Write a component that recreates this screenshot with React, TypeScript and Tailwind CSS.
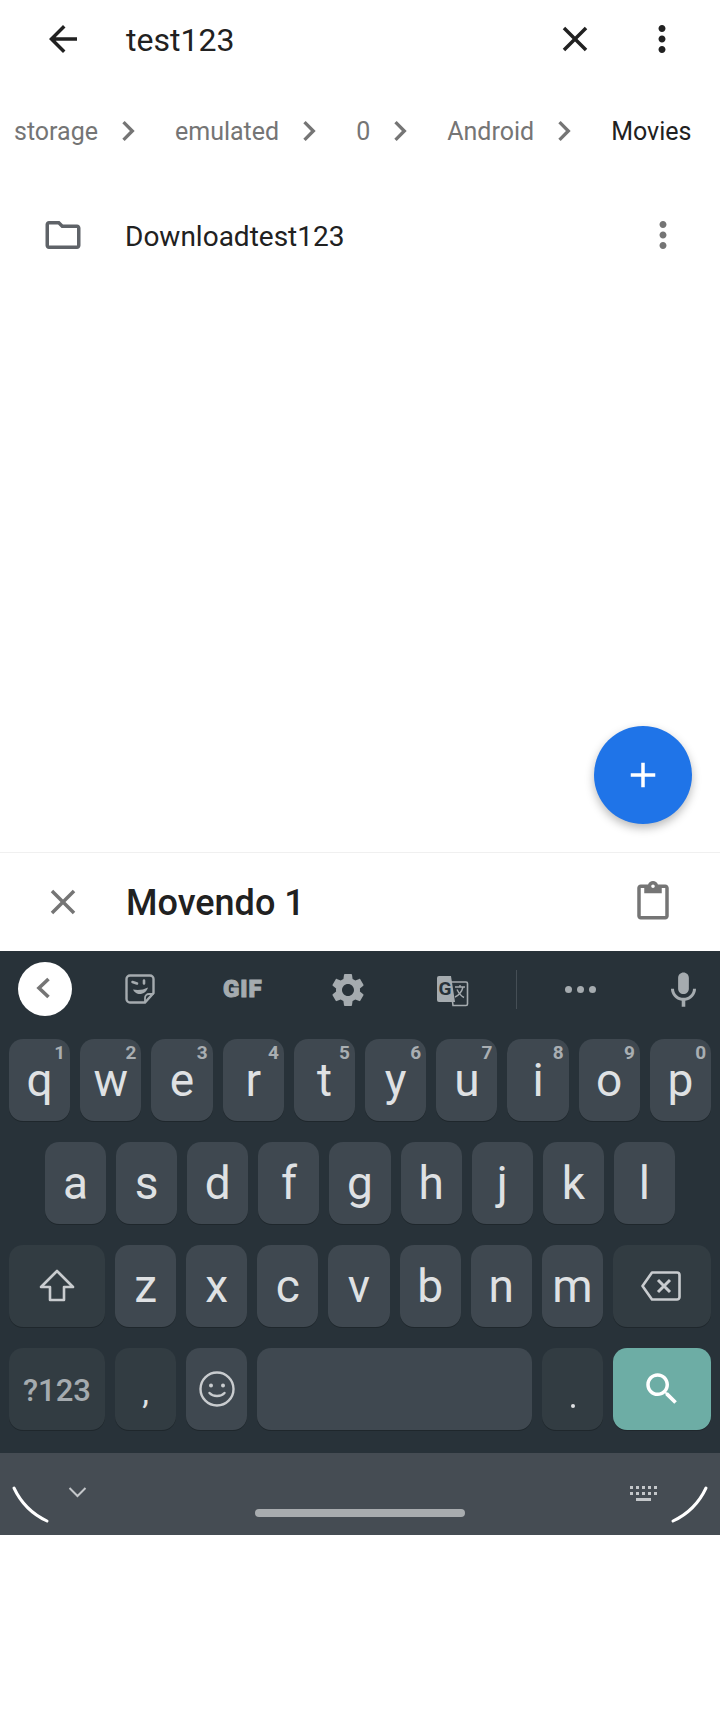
const R = '[font-family:Roboto,sans-serif]';

function Icon({ d, size = 42, fill = "#212121", className = "" }: { d: string; size?: number; fill?: string; className?: string }) {
    return (
        <svg width={size} height={size} viewBox="0 0 24 24" fill={fill} className={"shrink-0 " + className}>
            <path d={d} />
        </svg>
    );
}

const BACK = "M20 11H7.83l5.59-5.59L12 4l-8 8 8 8 1.41-1.41L7.83 13H20v-2z";
const CLOSE = "M19 6.41L17.59 5 12 10.59 6.41 5 5 6.41 10.59 12 5 17.59 6.41 19 12 13.41 17.59 19 19 17.59 13.41 12z";
const MORE = "M12 8c1.1 0 2-.9 2-2s-.9-2-2-2-2 .9-2 2 .9 2 2 2zm0 2c-1.1 0-2 .9-2 2s.9 2 2 2 2-.9 2-2-.9-2-2-2zm0 6c-1.1 0-2 .9-2 2s.9 2 2 2 2-.9 2-2-.9-2-2-2z";
const FOLDER = "M9.17 6l2 2H20v10H4V6h5.17M10 4H4c-1.1 0-1.99.9-1.99 2L2 18c0 1.1.9 2 2 2h16c1.1 0 2-.9 2-2V8c0-1.1-.9-2-2-2h-8l-2-2z";
const CHEVRON = "M10 6L8.59 7.41 13.17 12l-4.58 4.59L10 18l6-6z";
const PASTE = "M19 2h-4.18C14.4.84 13.3 0 12 0c-1.3 0-2.4.84-2.82 2H5c-1.1 0-2 .9-2 2v16c0 1.1.9 2 2 2h14c1.1 0 2-.9 2-2V4c0-1.1-.9-2-2-2zm-7 0c.55 0 1 .45 1 1s-.45 1-1 1-1-.45-1-1 .45-1 1-1zm7 18H5V4h2v3h10V4h2v16z";
const GEAR = "M19.14 12.94c.04-.3.06-.61.06-.94 0-.32-.02-.64-.07-.94l2.03-1.58c.18-.14.23-.41.12-.61l-1.92-3.32c-.12-.22-.37-.29-.59-.22l-2.39.96c-.5-.38-1.03-.7-1.62-.94l-.36-2.54c-.04-.24-.24-.41-.48-.41h-3.84c-.24 0-.43.17-.47.41l-.36 2.54c-.59.24-1.13.57-1.62.94l-2.39-.96c-.22-.08-.47 0-.59.22L2.74 8.87c-.12.21-.08.47.12.61l2.03 1.58c-.05.3-.09.63-.09.94s.02.64.07.94l-2.03 1.58c-.18.14-.23.41-.12.61l1.92 3.32c.12.22.37.29.59.22l2.39-.96c.5.38 1.03.7 1.62.94l.36 2.54c.05.24.24.41.48.41h3.84c.24 0 .44-.17.47-.41l.36-2.54c.59-.24 1.13-.56 1.62-.94l2.39.96c.22.08.47 0 .59-.22l1.92-3.32c.12-.22.07-.47-.12-.61l-2.01-1.58zM12 15.6c-1.98 0-3.6-1.62-3.6-3.6s1.62-3.6 3.6-3.6 3.6 1.62 3.6 3.6-1.62 3.6-3.6 3.6z";
const MIC = "M12 14c1.66 0 2.99-1.34 2.99-3L15 5c0-1.66-1.34-3-3-3S9 3.34 9 5v6c0 1.66 1.34 3 3 3zm5.3-3c0 3-2.54 5.1-5.3 5.1S6.7 14 6.7 11H5c0 3.41 2.72 6.23 6 6.72V21h2v-3.28c3.28-.48 6-3.3 6-6.72h-1.7z";
const SEARCH = "M15.5 14h-.79l-.28-.27C15.41 12.59 16 11.11 16 9.5 16 5.91 13.09 3 9.5 3S3 5.91 3 9.5 5.91 16 9.5 16c1.61 0 3.09-.59 4.23-1.57l.27.28v.79l5 4.99L20.49 19l-4.99-5zm-6 0C7.01 14 5 11.99 5 9.5S7.01 5 9.5 5 14 7.01 14 9.5 11.99 14 9.5 14z";

function Crumb({ label, last }: { label: string; last?: boolean }) {
    return (
        <>
            <span className={"pt-[2px] " + (last ? "text-[#212121]" : "text-[#757575]")}>{label}</span>
            {!last && <Icon d={CHEVRON} size={40} fill="#757575" className="ml-[10px] mr-[27px]" />}
        </>
    );
}

function Key({ ch, hint, dark }: { ch: string; hint?: string; dark?: boolean }) {
    return (
        <div className={"relative flex-1 h-[82px] rounded-[14px] flex justify-center pt-[18px] text-[46px] leading-[46px] text-[#dfe1e3] shadow-[0_1px_0_#1f272c] " + (dark ? "bg-[#323c42]" : "bg-[#3f4850]")}>
            {ch}
            {hint && <span className="absolute top-[3px] right-[5px] text-[19px] leading-[22px] font-bold text-[#a9aeb2]">{hint}</span>}
        </div>
    );
}

function FnKey({ children, className = "" }: { children?: React.ReactNode; className?: string }) {
    return (
        <div className={"h-[82px] rounded-[14px] flex items-center justify-center shadow-[0_1px_0_#1f272c] " + className}>
            {children}
        </div>
    );
}

export default function App() {
    const row1 = [["q", "1"], ["w", "2"], ["e", "3"], ["r", "4"], ["t", "5"], ["y", "6"], ["u", "7"], ["i", "8"], ["o", "9"], ["p", "0"]];
    return (
        <div className={"w-[720px] h-[1712px] bg-white flex flex-col " + R}>
            <div className="relative h-[853px] border-b border-[#f0f0f0]">
                <div className="h-[78px] flex items-center pl-[42px] pr-[37px]">
                    <Icon d={BACK} />
                    <span className="ml-[42px] pt-[2px] flex-1 text-[32px] text-[#212121]">test123</span>
                    <Icon d={CLOSE} />
                    <Icon d={MORE} className="ml-[45px]" />
                </div>
                <div className="h-[106px] flex items-center pl-[14px] text-[25px]">
                    <Crumb label="storage" />
                    <Crumb label="emulated" />
                    <Crumb label="0" />
                    <Crumb label="Android" />
                    <Crumb label="Movies" last />
                </div>
                <div className="h-[102px] flex items-center pl-[42px] pr-[36px]">
                    <Icon d={FOLDER} fill="#5f6368" />
                    <span className="ml-[41px] pt-[3px] flex-1 text-[28px] text-[#212121]">Downloadtest123</span>
                    <Icon d={MORE} fill="#757575" />
                </div>
                <div className="absolute left-[594px] top-[726px] w-[98px] h-[98px] rounded-full bg-[#1f74e8] flex items-center justify-center shadow-[0_4px_10px_rgba(0,0,0,0.28)]">
                    <Icon d="M19 13h-6v6h-2v-6H5v-2h6V5h2v6h6v2z" size={42} fill="#ffffff" />
                </div>
            </div>
            <div className="h-[98px] flex items-center pl-[42px] pr-[46px]">
                <Icon d={CLOSE} fill="#757575" />
                <span className="ml-[42px] pt-[2px] flex-1 text-[36px] font-medium text-[#212121]">Movendo 1</span>
                <Icon d={PASTE} fill="#757575" />
            </div>
            <div className="bg-[#283239] pb-[23px]">
                <div className="relative h-[88px]">
                    <div className="absolute left-[18px] top-[11px] w-[54px] h-[54px] rounded-full bg-white flex items-center justify-center">
                        <svg width="40" height="40" viewBox="0 0 40 40" fill="none" stroke="#757575" strokeWidth="3.6">
                            <path d="M25 11 L15.5 20 L25 29" transform="translate(-1.5,-1)" />
                        </svg>
                    </div>
                    <svg className="absolute left-[125px] top-[23px]" width="30" height="30" viewBox="0 0 30 30" fill="none" stroke="#a5abaf" strokeWidth="2.4">
                        <path d="M5 1.5H25a3.5 3.5 0 0 1 3.5 3.5V19L20 28.5H5A3.5 3.5 0 0 1 1.5 25V5A3.5 3.5 0 0 1 5 1.5Z" />
                        <path d="M20 28.5V24a4 4 0 0 1 4-4h4.500" strokeWidth="1.8" />
                        <path d="M7.500 8l4.500 1.500M19 6.500v3" strokeLinecap="round" strokeWidth="2.6" />
                        <path d="M8 15.500c5 1 10 .5 15-2-1 4-5 7-9.500 6.500-2-.2-4.500-2-5.500-4.500Z" fill="#a5abaf" stroke="none" />
                    </svg>
                    <span className="absolute left-[223px] top-[25px] text-[24px] leading-[26px] font-black tracking-[1px] text-[#a5abaf] [-webkit-text-stroke:1px_#a5abaf]">GIF</span>
                    <Icon d={GEAR} size={40} fill="#a5abaf" className="absolute left-[328px] top-[19px]" />
                    <svg className="absolute left-[437px] top-[24px]" width="32" height="32" viewBox="0 0 32 32">
                        <path d="M13 7H29a1.5 1.5 0 0 1 1.5 1.5V29a1.5 1.5 0 0 1-1.5 1.5H16L13 7Z" fill="none" stroke="#a5abaf" strokeWidth="1.6" />
                        <path d="M2 1H14L18 27H2a2 2 0 0 1-2-2V3a2 2 0 0 1 2-2Z" fill="#a5abaf" />
                        <text x="1.5" y="20" fontSize="19" fontWeight="700" fill="#283239">G</text>
                        <path d="M18 12H28M23 10V12M26 12C25 17 21 21 18 22M20 14.5c1.5 3 4 6.500 7 8" fill="none" stroke="#a5abaf" strokeWidth="1.4" />
                    </svg>
                    <div className="absolute left-[516px] top-[19px] w-px h-[39px] bg-[#454e55]" />
                    <div className="absolute left-[565px] top-[35px] flex gap-[5px]">
                        <span className="w-[7px] h-[7px] rounded-full bg-[#a5abaf]" />
                        <span className="w-[7px] h-[7px] rounded-full bg-[#a5abaf]" />
                        <span className="w-[7px] h-[7px] rounded-full bg-[#a5abaf]" />
                    </div>
                    <Icon d={MIC} size={43} fill="#a5abaf" className="absolute left-[662px] top-[18px]" />
                </div>
                <div className="flex flex-col gap-[21px]">
                    <div className="flex gap-[10px] px-[9px]">
                        {row1.map(([c, h]) => <Key key={c} ch={c} hint={h} />)}
                    </div>
                    <div className="flex gap-[10px] px-[45px]">
                        {"asdfghjkl".split("").map((c) => <Key key={c} ch={c} />)}
                    </div>
                    <div className="flex gap-[10px] px-[9px]">
                        <FnKey className="w-[96px] bg-[#323c42]">
                            <svg width="36" height="34" viewBox="0 0 36 34" fill="none" stroke="#c9cccf" strokeWidth="2.6" strokeLinejoin="round">
                                <path d="M18 2 L34 18 H25 V31 H11 V18 H2 Z" />
                            </svg>
                        </FnKey>
                        {"zxcvbnm".split("").map((c) => <Key key={c} ch={c} />)}
                        <FnKey className="w-[98px] bg-[#323c42]">
                            <svg width="40" height="30" viewBox="0 0 40 30" fill="none" stroke="#c9cccf" strokeWidth="2.6" className="-translate-x-[1px]">
                                <path d="M11 1.500H36a2.500 2.500 0 0 1 2.500 2.500V26a2.500 2.500 0 0 1-2.500 2.500H11L1.500 15Z" strokeLinejoin="round" />
                                <path d="M17 9 L29 21 M29 9 L17 21" strokeWidth="3" />
                            </svg>
                        </FnKey>
                    </div>
                    <div className="flex gap-[10px] px-[9px]">
                        <FnKey className="w-[96px] bg-[#323c42] pt-[4px] text-[31px] font-medium text-[#a5abaf]">?123</FnKey>
                        <FnKey className="w-[61px] bg-[#323c42] text-[34px] text-[#dfe1e3] !items-end pb-[12px]">,</FnKey>
                        <FnKey className="w-[61px] bg-[#3f4850]">
                            <svg width="38" height="38" viewBox="0 0 38 38" fill="none" stroke="#c9cccf" strokeWidth="2.4">
                                <circle cx="19" cy="19" r="16.500" />
                                <circle cx="13" cy="15.500" r="2" fill="#c9cccf" stroke="none" />
                                <circle cx="25" cy="15.500" r="2" fill="#c9cccf" stroke="none" />
                                <path d="M11.500 23c3.500 4 11.500 4 15 0" strokeLinecap="round" />
                            </svg>
                        </FnKey>
                        <FnKey className="flex-1 bg-[#3f4850]" />
                        <FnKey className="w-[61px] bg-[#323c42] !items-end pb-[22px]">
                            <span className="w-[4px] h-[4px] rounded-full bg-[#dfe1e3]" />
                        </FnKey>
                        <FnKey className="w-[98px] bg-[#6dada5]">
                            <Icon d={SEARCH} fill="#ffffff" />
                        </FnKey>
                    </div>
                </div>
            </div>
            <div className="relative h-[82px] bg-[#454c53]">
                <svg className="absolute left-[12px] top-[33px]" width="38" height="37" viewBox="0 0 38 37" fill="none" stroke="#ffffff" strokeWidth="3" strokeLinecap="round">
                    <path d="M2 2C9 17 20 28 35 35" />
                </svg>
                <svg className="absolute left-[68px] top-[34px]" width="19" height="11" viewBox="0 0 19 11" fill="none" stroke="#c4c7ca" strokeWidth="2">
                    <path d="M1.500 1 L9.500 9 L17.500 1" />
                </svg>
                <div className="absolute left-[255px] top-[56px] w-[210px] h-[8px] rounded-full bg-[#a8acaf]" />
                <svg className="absolute left-[630px] top-[33px]" width="27" height="15" viewBox="0 0 27 15" fill="#c4c7ca">
                    <path d="M0 0h3v3H0zM6 0h3v3H6zM12 0h3v3h-3zM18 0h3v3h-3zM24 0h3v3h-3zM0 6h3v3H0zM6 6h3v3H6zM12 6h3v3h-3zM18 6h3v3h-3zM24 6h3v3h-3zM6 12h15v3H6z" />
                </svg>
                <svg className="absolute left-[670px] top-[33px]" width="38" height="37" viewBox="0 0 38 37" fill="none" stroke="#ffffff" strokeWidth="3" strokeLinecap="round">
                    <path d="M36 2C29 17 18 28 3 35" />
                </svg>
            </div>
        </div>
    );
}
